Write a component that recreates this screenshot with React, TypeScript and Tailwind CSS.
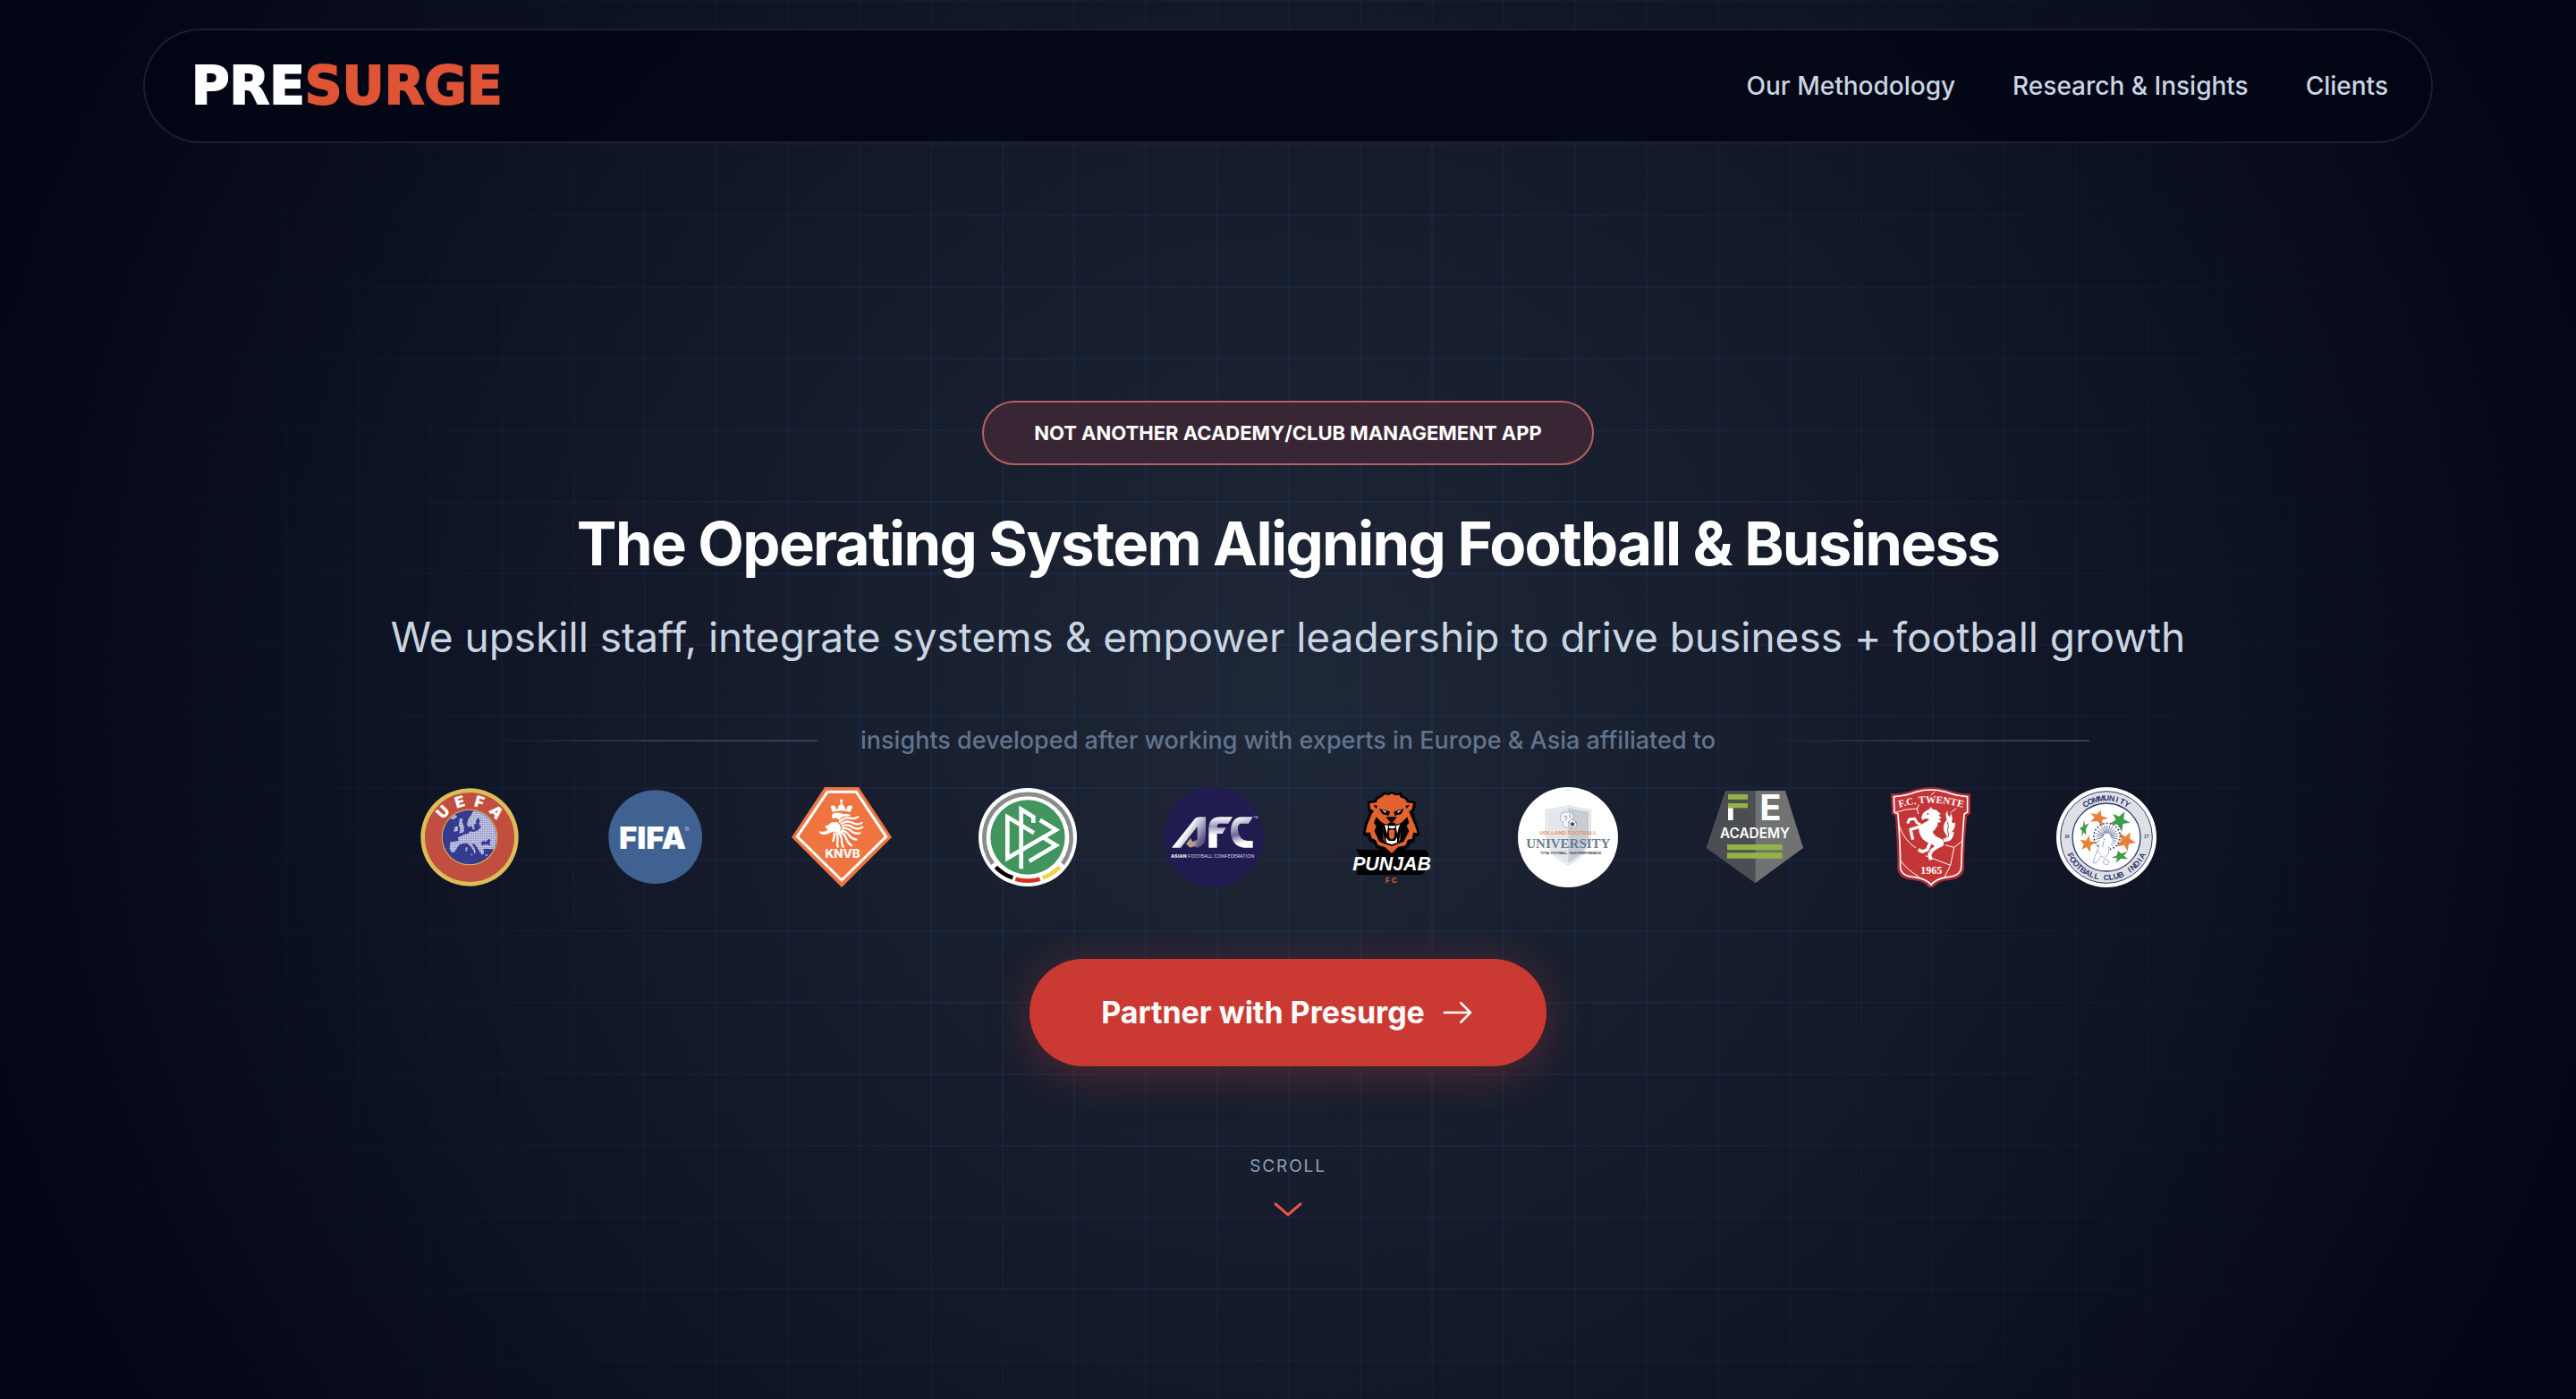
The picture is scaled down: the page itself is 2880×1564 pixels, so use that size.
import type { ReactNode } from 'react';

const NAV_LINKS = ['Our Methodology', 'Research & Insights', 'Clients'];

type LogoProps = {
  title: string;
  viewBox: string;
  className?: string;
  children: ReactNode;
};

function Logo({ title, viewBox, className = 'w-28', children }: LogoProps) {
  return (
    <svg role="img" aria-label={title} viewBox={viewBox} className={`h-28 shrink-0 overflow-visible ${className}`}>
      {children}
    </svg>
  );
}

type ArcTextProps = {
  text: string;
  cx: number;
  cy: number;
  radius: number;
  step: number;
  className: string;
  bottom?: boolean;
};

// Sets one letter per `step` degrees round the centre of a crest
function ArcText({ text, cx, cy, radius, step, className, bottom = false }: ArcTextProps) {
  const letters = text.split('');
  const dir = bottom ? -1 : 1;
  return (
    <g className={className} textAnchor="middle">
      {letters.map((letter, i) => {
        const angle = dir * step * (i - (letters.length - 1) / 2);
        return (
          <text key={i} x={cx} y={cy - dir * radius} transform={`rotate(${angle} ${cx} ${cy})`}>
            {letter}
          </text>
        );
      })}
    </g>
  );
}

function UefaLogo() {
  return (
    <Logo title="UEFA" viewBox="87 60 336 336">
      <defs>
        <pattern id="uefa-dots" width="6" height="6" patternUnits="userSpaceOnUse">
          <rect width="6" height="6" fill="#8085bd" />
          <rect width="4.6" height="4.6" fill="#d3d5ec" />
        </pattern>
        <clipPath id="uefa-globe">
          <circle cx="255" cy="228" r="90" />
        </clipPath>
      </defs>
      <circle cx="255" cy="228" r="164" fill="#dcbd57" />
      <circle cx="255" cy="228" r="150" fill="#c24e40" />
      <circle cx="255" cy="228" r="94" fill="#dcbd57" />
      <circle cx="255" cy="228" r="91" fill="#353c8f" />
      <g clipPath="url(#uefa-globe)" fill="url(#uefa-dots)">
        <path d="M268 138 L262 150 L250 168 L246 186 L252 194 L262 190 L266 202 L274 204 L280 188 L276 174 L284 162 L290 172 L286 186 L294 192 L284 204 L268 210 L256 208 L250 216 L238 218 L226 224 L216 228 L218 240 L206 242 L190 244 L188 268 L196 280 L206 276 L214 262 L222 252 L236 248 L248 248 L258 258 L268 272 L272 284 L276 276 L270 262 L262 250 L270 250 L280 262 L290 278 L298 288 L304 278 L300 268 L312 266 L330 268 L360 270 L360 130 Z" />
        <path d="M222 166 L232 164 L230 178 L236 190 L236 210 L220 216 L224 200 L218 188 Z" />
        <path d="M206 192 L216 192 L216 206 L202 210 Z" />
        <path d="M190 158 L206 152 L214 160 L202 168 L190 166 Z" />
        <path d="M242 262 L248 262 L246 276 L241 274 Z M258 284 L266 284 L262 290 Z M306 286 L318 286 L312 292 Z" />
      </g>
      <path d="M294 244 L304 240 L310 244 L318 234 L326 236 L322 248 L326 256 L310 252 L296 256 Z M270 186 L280 180 L288 184 L280 204 L272 206 Z" fill="#353c8f" />
      <ArcText text="UEFA" cx={255} cy={228} radius={105} step={31} className="fill-white font-['Inter'] text-[52px] font-black" />
    </Logo>
  );
}

function FifaLogo() {
  return (
    <Logo title="FIFA" viewBox="711 60 336 336">
      <circle cx="878" cy="227" r="157" fill="#3f6293" />
      <text x="756" y="268" className="fill-white font-['Inter'] text-[104px] font-black">FIFA</text>
      <text x="976" y="210" className="fill-[#b9c7dc] font-['Inter'] text-[24px]">®</text>
    </Logo>
  );
}

function KnvbLogo() {
  return (
    <Logo title="KNVB" viewBox="75 60 336 336">
      <path d="M186 60 H300 L411 228 L243 396 L75 228 Z" fill="#ef7440" />
      <path d="M195 76 H292 L392 226 L243 372 L94 226 Z" fill="none" stroke="#fff" strokeWidth="9" />
      <g fill="#fff">
        <circle cx="242" cy="105" r="5" />
        <path d="M239 110 h6 v10 h-6z" />
        <path d="M212 143 L206 126 Q208 118 217 122 Q226 126 224 136 Q230 136 232 124 Q242 112 252 124 Q254 136 260 136 Q258 126 267 122 Q276 118 279 126 L272 143 Q242 134 212 143 Z" />
        <path d="M212 166 Q206 148 220 146 Q234 144 250 150 Q266 148 274 154 Q262 160 250 158 Q240 160 236 170 Q224 160 212 166 Z" />
        <path d="M188 190 L200 186 Q208 174 226 178 Q238 182 240 196 Q240 208 228 212 Q212 206 204 214 Q190 222 176 218 Q166 214 168 206 Q176 212 188 208 L198 202 Q188 200 188 190 Z" />
      </g>
      <g fill="none" stroke="#fff" strokeWidth="7" strokeLinecap="round">
        <path d="M236 176 Q252 160 272 164 Q286 168 298 160" />
        <path d="M242 182 Q262 170 280 180 Q294 188 310 180" />
        <path d="M246 190 Q266 182 282 196 Q296 204 312 194" />
        <path d="M246 198 Q264 196 276 208 Q288 218 304 214" />
        <path d="M242 206 Q258 206 268 222 Q278 234 292 236" />
        <path d="M236 210 Q252 214 258 232 Q264 248 276 256" />
        <path d="M232 212 Q244 226 243 240 Q243 252 248 260" />
        <path d="M226 214 Q232 230 229 242 Q227 252 230 260" />
        <path d="M218 214 Q220 226 214 240" />
      </g>
      <text x="246" y="297" textAnchor="middle" className="fill-white font-['Inter'] text-[40px] font-extrabold">KNVB</text>
    </Logo>
  );
}

function DfbLogo() {
  return (
    <Logo title="DFB" viewBox="699 60 336 336">
      <circle cx="867" cy="228" r="165" fill="#fff" />
      <circle cx="867" cy="228" r="125" fill="#42955f" />
      <g fill="none" strokeWidth="14">
        <path d="M750 317 A146 146 0 1 1 984 317" stroke="#8b8b8b" />
        <path d="M760 328 A145 145 0 0 0 817 364" stroke="#000" />
        <path d="M826 368 A145 145 0 0 0 908 368" stroke="#d92d20" />
        <path d="M917 364 A145 145 0 0 0 974 328" stroke="#f8cf46" />
      </g>
      <g fill="none" stroke="#fff" strokeWidth="14" strokeMiterlimit="8">
        <path d="M888 214 L799 160 V298 L962 203 L908 170" />
        <path d="M845 334 V134 L886 160 V180" />
        <path d="M914 226 L962 255 L872 308" />
      </g>
    </Logo>
  );
}

function AfcLogo() {
  return (
    <Logo title="Asian Football Confederation" viewBox="93 60 336 336">
      <defs>
        <linearGradient id="afc-a" x1="0" y1="0" x2="1" y2="0.6">
          <stop offset="0.5" stopColor="#fff" />
          <stop offset="1" stopColor="#5d588a" />
        </linearGradient>
        <linearGradient id="afc-f" x1="0" y1="0" x2="0" y2="1">
          <stop offset="0" stopColor="#fff" />
          <stop offset="0.3" stopColor="#9c98bd" />
          <stop offset="0.6" stopColor="#fff" />
        </linearGradient>
        <linearGradient id="afc-c" x1="0.3" y1="0" x2="0.5" y2="1">
          <stop offset="0" stopColor="#fff" />
          <stop offset="0.55" stopColor="#6b6698" />
          <stop offset="0.85" stopColor="#fff" />
        </linearGradient>
      </defs>
      <circle cx="261" cy="228" r="168" fill="#211c4f" />
      <path d="M120 263 L194 170 Q202 160 214 160 H234 V226 Q232 256 206 263 L172 250 L206 236 V192 L150 263 Z" fill="url(#afc-a)" />
      <path d="M168 250 L184 230 Q186 244 204 250 Q192 264 180 262 Z" fill="#b5a27c" />
      <path d="M244 263 V196 Q246 160 282 160 H324 L310 182 H280 Q272 182 272 196 H302 L290 216 H272 V263 Z" fill="url(#afc-f)" />
      <path d="M392 160 L378 182 H352 Q340 184 342 204 Q346 238 374 240 H392 V263 H362 Q322 258 318 212 Q318 160 356 160 Z" fill="url(#afc-c)" />
      <text x="257" y="296" textAnchor="middle" className="fill-[#d8d6e6] font-['Inter'] text-[16px]">
        <tspan className="font-black">ASIAN</tspan> FOOTBALL CONFEDERATION
      </text>
      <text x="394" y="166" className="fill-[#d8d6e6] font-['Inter'] text-[10px]">TM</text>
    </Logo>
  );
}

function PunjabLogo() {
  return (
    <Logo title="Punjab FC" viewBox="717 60 276 336" className="w-[92px]">
      <path d="M822 84 L832 76 L842 80 L858 74 L874 80 L892 78 L894 86 L908 94 L914 104 L938 108 L938 126 L930 142 L938 170 L946 194 L952 222 L938 226 L934 244 L920 248 L912 264 L890 272 L858 290 L830 272 L806 264 L798 248 L782 240 L778 226 L762 222 L766 186 L782 148 L778 128 L776 108 L800 104 L808 92 Z" fill="#000" />
      <path d="M826 92 L836 84 L846 88 L858 82 L870 88 L884 86 L886 94 L902 100 L910 112 L930 114 L926 134 L916 142 L926 166 L936 190 L944 214 L930 212 L926 234 L912 236 L904 256 L880 260 L858 282 L836 262 L812 254 L804 238 L790 230 L786 212 L770 212 L776 186 L790 152 L798 140 L786 132 L784 114 L806 112 L812 100 Z" fill="#e2622f" />
      <path d="M796 120 L810 122 L806 132 Z M918 120 L904 122 L908 132 Z M816 132 L852 142 L848 156 L826 150 Z M898 132 L866 142 L868 156 L890 150 Z M838 160 L876 160 L866 172 L858 182 L848 172 Z M806 160 L822 176 L836 184 L828 200 L830 236 L838 252 L816 242 L800 208 L806 190 L798 180 Z M910 160 L894 176 L880 184 L888 200 L886 236 L876 252 L898 242 L916 208 L908 190 L916 180 Z M834 184 L858 178 L884 184 L888 206 L880 250 L858 258 L836 250 L828 206 Z" fill="#000" />
      <path d="M824 136 L840 142 L836 146 Z M892 136 L876 142 L880 146 Z" fill="#fff" />
      <path d="M834 186 L846 190 L842 216 Z M884 186 L872 190 L876 216 Z M848 190 H870 L868 198 H850 Z M838 228 L848 240 H868 L876 228 L876 246 L858 252 L840 246 Z" fill="#fff" />
      <path d="M848 206 Q858 198 868 206 L866 230 L858 236 L850 230 Z" fill="#e2622f" />
      <path d="M838 154 L830 176 L846 182 M876 154 L886 176 L870 182" fill="none" stroke="#e2622f" strokeWidth="8" />
      <path d="M738 266 L760 270 H832 L858 286 L886 270 H970 Q984 276 980 292 L972 338 Q966 354 950 354 H740 L752 292 Z" fill="#000" />
      <text x="858" y="338" textAnchor="middle" className="fill-white font-['Liberation_Sans_Narrow','Liberation_Sans',sans-serif] text-[64px] font-bold italic">PUNJAB</text>
      <text x="856" y="380" textAnchor="middle" className="fill-[#e2622f] font-['Inter'] text-[24px] font-bold">F C</text>
    </Logo>
  );
}

function UniversityLogo() {
  return (
    <Logo title="Holland Football University" viewBox="81 60 336 336">
      <circle cx="249" cy="228" r="168" fill="#fff" />
      <path d="M175 136 Q212 132 250 122 Q288 132 325 136 V226 Q318 290 250 322 Q182 290 175 226 Z" fill="#f0f2f4" stroke="#c3cad2" strokeWidth="2" />
      <path d="M181 141 Q214 138 250 128 V315 Q188 284 181 226 Z" fill="#e3e7eb" />
      <path d="M319 141 Q286 138 250 128 V315 Q312 284 319 226 Z" fill="#c6ccd5" />
      <path d="M224 160 Q222 146 240 144 Q262 140 268 158 Q262 168 266 176 Q254 186 246 196 Q226 192 234 178 Q222 176 224 160 Z" fill="#f3f4f6" stroke="#8f98a5" strokeWidth="2" />
      <path d="M234 156 L246 160 L240 172 M254 150 L258 164" fill="none" stroke="#8f98a5" strokeWidth="3" />
      <circle cx="264" cy="184" r="14" fill="#fff" stroke="#77818f" strokeWidth="2" />
      <path d="M264 177 L271 182 L268 190 H260 L257 182 Z M251 180 L254 174 M277 180 L274 174 M258 196 L262 198" fill="#4c5563" stroke="#4c5563" strokeWidth="2" />
      <text x="250" y="219" textAnchor="middle" className="fill-[#ee8d45] font-['Liberation_Sans',sans-serif] text-[18px] font-bold">HOLLAND FOOTBALL</text>
      <text x="250" y="264" textAnchor="middle" className="fill-[#6d7b8e] font-['Liberation_Serif',serif] text-[45px] font-bold">UNIVERSITY</text>
      <text x="259" y="286" textAnchor="middle" className="fill-[#333a45] font-['Liberation_Sans',sans-serif] text-[10px] font-bold">TOTAL FOOTBALL · HIGH PERFORMANCE</text>
    </Logo>
  );
}

function AcademyLogo() {
  return (
    <Logo title="FE Academy" viewBox="705 60 336 336">
      <path d="M777 72 H877 V382 L713 264 Z" fill="#4d4e53" />
      <path d="M877 72 H978 L1038 264 L877 382 Z" fill="#707372" />
      <path d="M786 84 h66 v17 h-66z M786 114 h66 v16 h-66z M783 252 h185 v19 h-185z M783 280 h185 v19 h-185z" fill="#93b445" />
      <path d="M786 130 h17 v41 h-17z" fill="#fff" />
      <text x="892" y="171" className="fill-white font-['Inter'] text-[120px] leading-none font-bold">E</text>
      <text x="876" y="230" textAnchor="middle" className="fill-white font-['Inter'] text-[46px] font-semibold">ACADEMY</text>
    </Logo>
  );
}

function TwenteLogo() {
  return (
    <Logo title="F.C. Twente" viewBox="69 60 270 336" className="w-[90px]">
      <defs>
        <path id="twente-arc" d="M96 130 Q207 96 318 130" />
      </defs>
      <path d="M72 82 Q120 80 150 68 Q206 52 262 68 Q292 80 339 82 V150 L328 156 Q318 250 318 332 Q316 368 264 372 Q228 376 216 396 H198 Q186 376 148 372 Q96 368 94 332 Q94 250 86 156 L75 150 Z" fill="#a52c38" />
      <path d="M82 92 Q130 88 156 76 Q206 62 256 76 Q284 88 329 92 V144 L318 150 Q310 250 308 330 Q306 358 260 362 Q222 368 207 388 Q192 368 152 362 Q106 358 104 330 Q104 250 96 150 L84 144 Z" fill="#c43536" stroke="#fff" strokeWidth="5" />
      <g fill="none" stroke="#fff" strokeWidth="3">
        <path d="M84 146 Q120 132 160 132 L166 118 M160 132 L164 150" />
        <path d="M100 190 Q118 240 156 264 M188 290 L272 322 L284 262 L312 240 M284 262 L254 254 M104 306 Q130 340 166 360 M272 322 L252 362 M272 146 L292 130 M206 88 L220 74" />
      </g>
      {/* head and mane */}
      <path d="M174 162 L180 148 Q190 138 200 134 L206 126 L212 134 Q226 134 232 144 L240 150 L232 153 L242 164 L233 165 L241 178 L230 178 Q230 190 224 196 L200 184 Q202 172 198 166 L186 166 L178 170 Z" fill="#fff" />
      {/* chest, body and haunch */}
      <path d="M200 170 L228 180 Q226 198 212 210 Q218 226 238 232 Q254 240 248 256 Q240 264 226 266 Q212 250 198 246 Q176 240 168 214 Q162 196 176 184 Z" fill="#fff" />
      <g fill="none" stroke="#fff" strokeLinejoin="round">
        <path d="M178 190 L158 196 L138 202 L142 220 L146 236" strokeWidth="10" />
        <path d="M172 186 L160 180 L152 166 L134 168 L128 182" strokeWidth="9" />
        <path d="M204 246 L194 270 L178 276 L164 270" strokeWidth="11" />
        <path d="M232 256 L210 272 L202 286 L206 304" strokeWidth="12" />
      </g>
      <path d="M248 232 Q258 234 260 222 Q244 206 250 186 Q252 176 260 170 Q252 150 262 138 Q260 152 270 160 Q274 154 272 146 Q282 162 276 176 Q282 184 288 178 Q290 196 276 210 Q284 212 284 206 Q282 234 268 240 Q258 244 248 242 Z" fill="#fff" />
      <path d="M262 176 Q268 190 262 206 Q270 222 262 230" fill="none" stroke="#c43536" strokeWidth="3" />
      <circle cx="196" cy="150" r="3" fill="#c43536" />
      <text className="fill-white font-['Liberation_Serif',serif] text-[34px] font-bold" textAnchor="middle">
        <textPath href="#twente-arc" startOffset="50%">F.C. TWENTE</textPath>
      </text>
      <text x="208" y="350" textAnchor="middle" className="fill-white font-['Liberation_Serif',serif] text-[36px] font-bold">1965</text>
    </Logo>
  );
}

const STAR = 'M0 -26 L7 -8 L27 -8 L12 4 L20 24 L0 13 L-18 22 L-10 4 L-25 -6 L-7 -8 Z';

function CommunityLogo() {
  const rays = Array.from({ length: 24 }, (_, i) => i * 15);
  return (
    <Logo title="Community Football Club India" viewBox="627 60 336 336">
      <circle cx="795" cy="228" r="168" fill="#fff" />
      <circle cx="795" cy="228" r="154" fill="#dfe0e4" stroke="#2d3a73" strokeWidth="3" />
      <circle cx="795" cy="228" r="114" fill="#fff" stroke="#2d3a73" strokeWidth="4" />
      <g fill="#e5813a">
        <path d={STAR} transform="translate(768 162) rotate(18) scale(1.2 1)" />
        <path d={STAR} transform="translate(862 240) rotate(100) scale(1.25)" />
        <path d={STAR} transform="translate(730 250) rotate(-60) scale(1.05)" />
      </g>
      <g fill="#3f9a4b">
        <path d={STAR} transform="translate(840 171) rotate(30) scale(1.25)" />
        <path d={STAR} transform="translate(719 200) rotate(-80) scale(1.1 0.55)" />
        <path d={STAR} transform="translate(840 291) rotate(-20) scale(1.1 0.75)" />
      </g>
      <g stroke="#2d3a73" strokeWidth="2" fill="#2d3a73">
        {rays.map((deg) => (
          <g key={deg} transform={`rotate(${deg} 797 225)`}>
            <path d="M797 214 V188" />
            <circle cx="797" cy="181" r="2" />
          </g>
        ))}
      </g>
      <path d="M772 236 L790 222 L806 222 L816 236 L808 262 L802 284 L790 296 L778 292 L764 314 L750 314 L756 296 L770 262 Z" fill="#fff" />
      <path d="M770 258 L756 294 L750 314 H762 L778 290 L788 298 L802 284 L804 256 M788 232 L782 262 M766 276 L776 284" fill="none" stroke="#2d3a73" strokeWidth="2" strokeDasharray="5 3" />
      <circle cx="794" cy="311" r="9" fill="#fff" stroke="#2d3a73" strokeWidth="2" strokeDasharray="4 2" />
      <ArcText text="COMMUNITY" cx={795} cy={228} radius={122} step={8} className="fill-[#2d3a73] font-['Liberation_Sans_Narrow','Liberation_Sans',sans-serif] text-[27px] font-bold" />
      <ArcText text="FOOTBALL CLUB INDIA" cx={795} cy={228} radius={144} step={7} bottom className="fill-[#2d3a73] font-['Liberation_Sans_Narrow','Liberation_Sans',sans-serif] text-[27px] font-bold" />
      <g textAnchor="middle" className="fill-[#2d3a73] font-['Liberation_Sans',sans-serif] text-[14px] font-bold">
        <text x="663" y="232">20</text>
        <text x="929" y="232">17</text>
      </g>
    </Logo>
  );
}

function Header() {
  return (
    <header className="relative mx-40 mt-8 flex h-32 items-center justify-between rounded-full border-2 border-white/10 bg-[#020515]/90 pr-12 pl-13">
      <a href="#top" className="font-['DejaVu_Sans',sans-serif] text-[58px] leading-none font-bold text-white [-webkit-text-stroke:2px_currentColor]">
        PRE<span className="text-[#de5434]">SURGE</span>
      </a>
      <nav className="flex items-center gap-16">
        {NAV_LINKS.map((link) => (
          <a key={link} href="#" className="text-[28px] leading-10 font-medium text-slate-300">
            {link}
          </a>
        ))}
      </nav>
    </header>
  );
}

export default function App() {
  return (
    <div
      id="top"
      className="relative flex min-h-screen flex-col bg-[radial-gradient(circle_at_center,#1f2838,#0f1424_60%,#020515_95%)] font-['Inter',sans-serif]"
    >
      {/* faint grid that fades out towards the edges */}
      <div className="pointer-events-none absolute inset-0 bg-[linear-gradient(to_right,rgba(40,80,170,0.13)_2px,transparent_2px),linear-gradient(to_bottom,rgba(40,80,170,0.13)_2px,transparent_2px)] bg-[size:80px_80px] mask-[radial-gradient(circle_at_center,black_30%,transparent_90%)]" />

      <Header />

      <main className="relative flex flex-1 flex-col items-center pt-72 text-center">
        <p className="flex h-18 items-center rounded-full border-2 border-[#b56064] bg-[#3a2735]/95 px-14 text-[22px] leading-8 font-bold text-white">
          NOT ANOTHER ACADEMY/CLUB MANAGEMENT APP
        </p>

        <h1 className="mt-12 text-[67px] leading-20 font-bold tracking-tight text-white">
          The Operating System Aligning Football &amp; Business
        </h1>
        <p className="mt-8 text-[46px] leading-16 text-slate-300">
          We upskill staff, integrate systems &amp; empower leadership to drive business + football growth
        </p>

        <div className="mt-16 flex w-full max-w-[1792px] items-center gap-12">
          <span className="h-0.5 flex-1 bg-linear-to-r from-transparent via-slate-700/80 to-slate-700" />
          <p className="text-[27px] leading-10 font-medium text-slate-500">
            insights developed after working with experts in Europe &amp; Asia affiliated to
          </p>
          <span className="h-0.5 flex-1 bg-linear-to-r from-transparent via-slate-700/80 to-slate-700" />
        </div>

        <div className="mt-8 flex items-center justify-center gap-24">
          <UefaLogo />
          <FifaLogo />
          <KnvbLogo />
          <DfbLogo />
          <AfcLogo />
          <PunjabLogo />
          <UniversityLogo />
          <AcademyLogo />
          <TwenteLogo />
          <CommunityLogo />
        </div>

        <button
          type="button"
          className="mt-20 flex h-30 items-center gap-4 rounded-full bg-[#cb3a32] px-20 text-[34px] leading-12 font-bold text-white shadow-[0_8px_50px_rgba(203,58,50,0.35)]"
        >
          Partner with Presurge
          <svg viewBox="0 0 24 24" fill="none" stroke="currentColor" strokeWidth="1.5" strokeLinecap="round" strokeLinejoin="round" className="size-10">
            <path d="M14.5 5.5l6.5 6.5m0 0l-6.5 6.5m6.5-6.5H3.5" />
          </svg>
        </button>

        <a href="#next" className="mt-24 flex flex-col items-center gap-2 text-[19px] leading-8 tracking-widest text-slate-400">
          SCROLL
          <svg viewBox="0 0 24 24" fill="none" stroke="#e5534b" strokeWidth="1.5" strokeLinecap="round" strokeLinejoin="round" className="size-12">
            <path d="M19 9l-7 6-7-6" />
          </svg>
        </a>
      </main>
    </div>
  );
}
